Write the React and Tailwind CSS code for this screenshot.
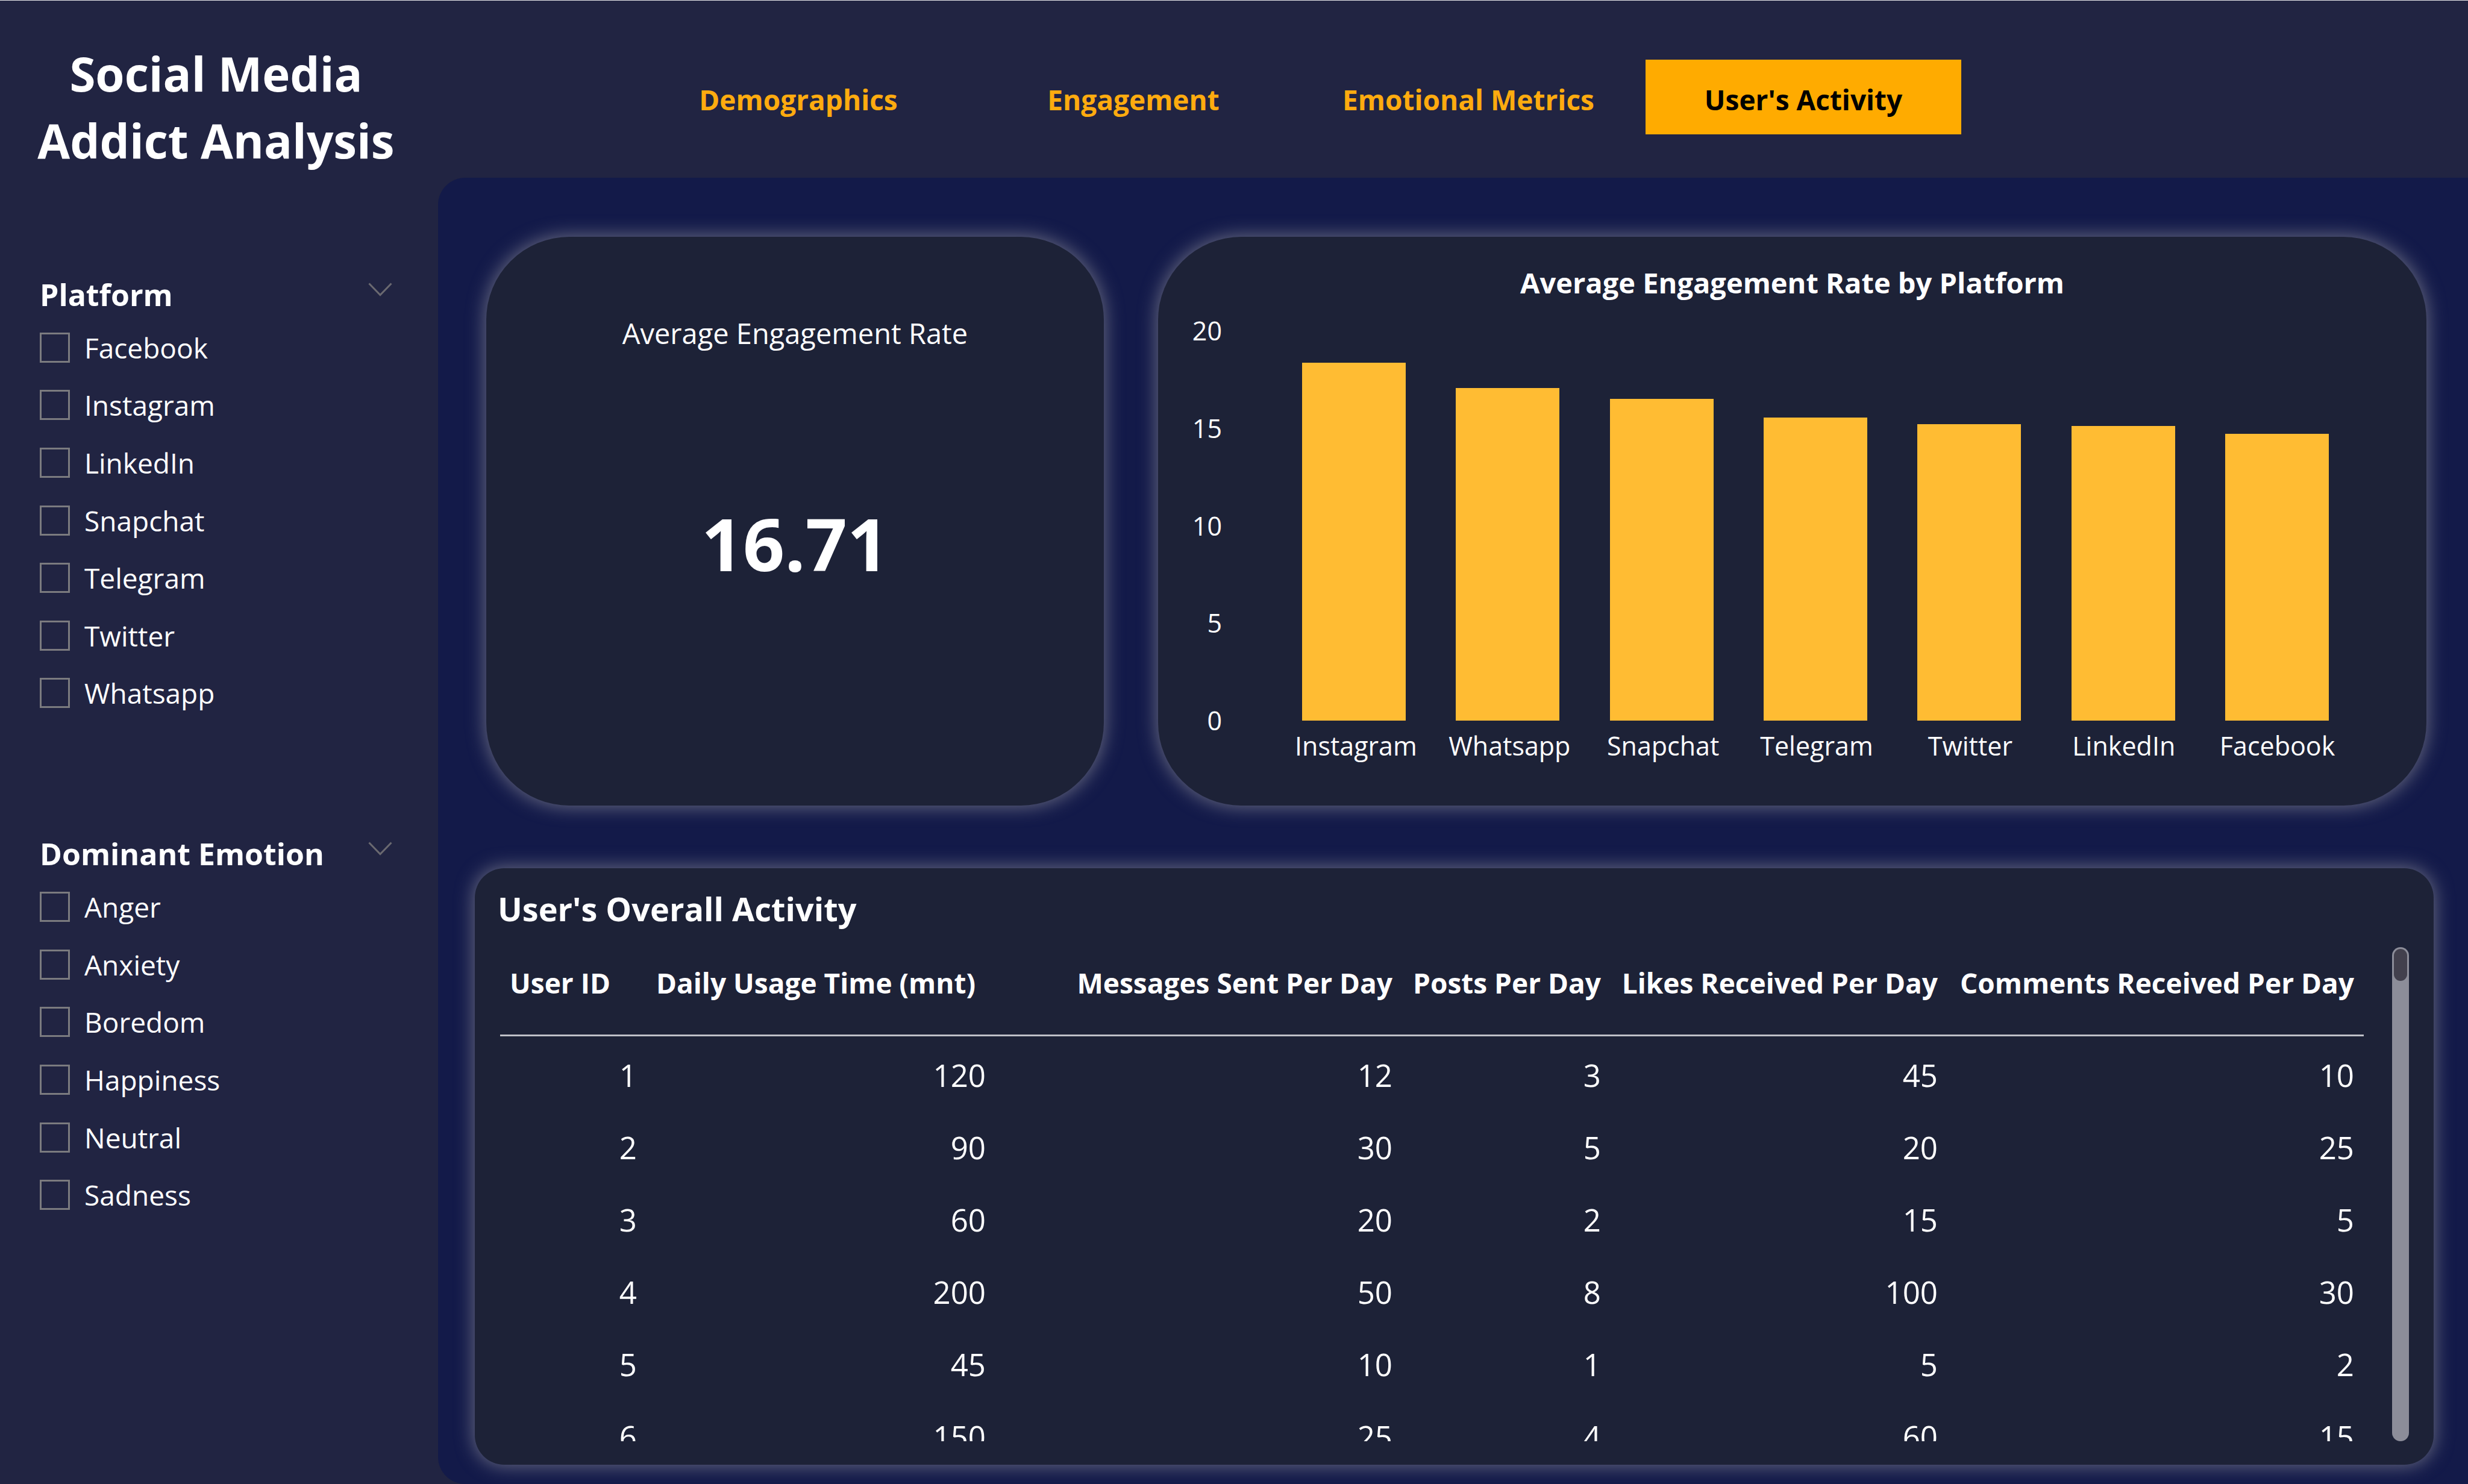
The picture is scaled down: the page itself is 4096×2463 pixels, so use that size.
const NAV = ["Demographics", "Engagement", "Emotional Metrics", "User's Activity"];
const PLATFORMS = ["Facebook", "Instagram", "LinkedIn", "Snapchat", "Telegram", "Twitter", "Whatsapp"];
const EMOTIONS = ["Anger", "Anxiety", "Boredom", "Happiness", "Neutral", "Sadness"];
const BARS = [
  ["Instagram", 18.35],
  ["Whatsapp", 17.06],
  ["Snapchat", 16.5],
  ["Telegram", 15.56],
  ["Twitter", 15.21],
  ["LinkedIn", 15.11],
  ["Facebook", 14.73],
];
const COLUMNS = [
  "User ID",
  "Daily Usage Time (mnt)",
  "Messages Sent Per Day",
  "Posts Per Day",
  "Likes Received Per Day",
  "Comments Received Per Day",
];
const ROWS = [
  [1, 120, 12, 3, 45, 10],
  [2, 90, 30, 5, 20, 25],
  [3, 60, 20, 2, 15, 5],
  [4, 200, 50, 8, 100, 30],
  [5, 45, 10, 1, 5, 2],
  [6, 150, 25, 4, 60, 15],
];

function Chevron() {
  return (
    <svg viewBox="0 0 40 24" className="h-6 w-10" fill="none" stroke="#6a6970" strokeWidth="3">
      <path d="M1.5 1.5 L20 20.5 L38.5 1.5" />
    </svg>
  );
}

function Slicer({ title, items, listClass }) {
  return (
    <section>
      <div className="mb-[6px] flex justify-between">
        <h2 className="text-[50px] leading-[68px] font-bold">{title}</h2>
        <button type="button" aria-label={`Toggle ${title}`} className="flex h-[52px] items-center">
          <Chevron />
        </button>
      </div>
      <ul className={listClass}>
        {items.map((name) => (
          <li key={name} className="flex flex-1 items-center">
            <label className="flex items-center gap-6 text-[46px] leading-[64px]">
              <input
                type="checkbox"
                className="size-[50px] appearance-none border-3 border-[#7b7b7f] checked:bg-[#ffab00]"
              />
              {name}
            </label>
          </li>
        ))}
      </ul>
    </section>
  );
}

function Card({ className, children }) {
  return (
    <section className={`bg-[#1d2237] shadow-[0_0_30px_2px_#686a80] ${className}`}>{children}</section>
  );
}

function BarChart() {
  return (
    <div className="grid min-h-0 flex-1 grid-cols-[106px_1fr] grid-rows-[1fr_116px] gap-x-[91px]">
      <div className="-my-8 flex flex-col justify-between text-right text-[43px] leading-[64px]">
        {[20, 15, 10, 5, 0].map((tick) => (
          <span key={tick}>{tick}</span>
        ))}
      </div>
      <div className="flex items-end">
        {BARS.map(([name, value]) => (
          <div key={name} className="flex h-full flex-1 items-end justify-center">
            <div className="w-[172px] bg-[#ffbc33]" style={{ height: `${value * 5}%` }} />
          </div>
        ))}
      </div>
      <div />
      <div className="ml-1 flex pt-[10px] text-[43px] leading-[64px]">
        {BARS.map(([name]) => (
          <span key={name} className="flex flex-1 justify-center">
            {name}
          </span>
        ))}
      </div>
    </div>
  );
}

function ActivityTable() {
  return (
    <table className="w-full table-fixed border-separate border-spacing-0 text-right">
      <colgroup>
        <col className="w-[243px]" />
        <col className="w-[579px]" />
        <col className="w-[675px]" />
        <col className="w-[346px]" />
        <col className="w-[559px]" />
        <col className="w-[691px]" />
      </colgroup>
      <thead>
        <tr>
          {COLUMNS.map((name) => (
            <th
              key={name}
              scope="col"
              className="h-[148px] border-b-3 border-[#bfc0c8] px-4 pt-6 align-top text-[46px] leading-[70px] font-bold whitespace-nowrap nth-[-n+2]:text-left"
            >
              {name}
            </th>
          ))}
        </tr>
      </thead>
      <tbody>
        {ROWS.map((row) => (
          <tr key={row[0]}>
            {row.map((value, i) => (
              <td key={i} className="h-[120px] px-4 pt-2 text-[51px] leading-[68px]">
                {value}
              </td>
            ))}
          </tr>
        ))}
      </tbody>
    </table>
  );
}

export default function App() {
  return (
    <div className="flex h-screen w-full border-t border-[#e8e8ea] bg-[#212442] font-['Open_Sans','Noto_Sans',sans-serif] text-white">
      <aside className="flex w-[727px] shrink-0 flex-col pr-[76px] pl-[66px]">
        <h1 className="-mx-6 mt-[66px] text-center text-[78px] leading-[111px] font-bold">
          Social Media
          <br />
          Addict Analysis
        </h1>
        <div className="mt-[166px]">
          <Slicer title="Platform" items={PLATFORMS} listClass="flex h-[669px] flex-col" />
        </div>
        <div className="mt-[185px]">
          <Slicer title="Dominant Emotion" items={EMOTIONS} listClass="flex h-[574px] flex-col" />
        </div>
      </aside>

      <div className="flex min-w-0 flex-1 flex-col">
        <header className="h-[294px] shrink-0 pt-[98px] pl-[336px]">
          <nav className="flex gap-8">
            {NAV.map((name) => (
              <button
                key={name}
                type="button"
                className="h-[124px] w-[524px] pt-2 text-[46px] leading-[68px] font-bold text-[#ffab0f] last:bg-[#ffab00] last:text-black"
              >
                {name}
              </button>
            ))}
          </nav>
        </header>

        <main className="grid min-h-0 flex-1 grid-rows-[minmax(0,944fr)_minmax(0,990fr)] gap-[104px] rounded-l-[45px] bg-[#131a49] pt-[98px] pr-[57px] pb-8 pl-[61px]">
          <div className="flex gap-[90px] pr-3 pl-[19px]">
            <Card className="flex w-[1025px] flex-col items-center rounded-[138px] pt-[126px]">
              <h2 className="text-[47px] leading-[68px]">Average Engagement Rate</h2>
              <p className="mt-[230px] text-[121px] leading-[168px] font-bold">16.71</p>
            </Card>
            <Card className="flex min-w-0 flex-1 flex-col rounded-[138px] pt-[42px] pr-[120px] pb-[25px]">
              <h2 className="-mr-[120px] mb-[46px] text-center text-[47px] leading-[68px] font-bold">
                Average Engagement Rate by Platform
              </h2>
              <BarChart />
            </Card>
          </div>

          <Card className="flex flex-col rounded-[49px] pt-[31px] pr-[41px] pb-[39px] pl-[42px]">
            <h2 className="-ml-1 mb-7 text-[54px] leading-[72px] font-bold">User's Overall Activity</h2>
            <div className="flex min-h-0 flex-1 gap-[47px]">
              <div className="min-w-0 flex-1 overflow-hidden">
                <ActivityTable />
              </div>
              <div className="w-7 rounded-full bg-[#8c8d99] p-[3px]">
                <div className="h-[53px] rounded-full bg-[#42404d]" />
              </div>
            </div>
          </Card>
        </main>
      </div>
    </div>
  );
}
